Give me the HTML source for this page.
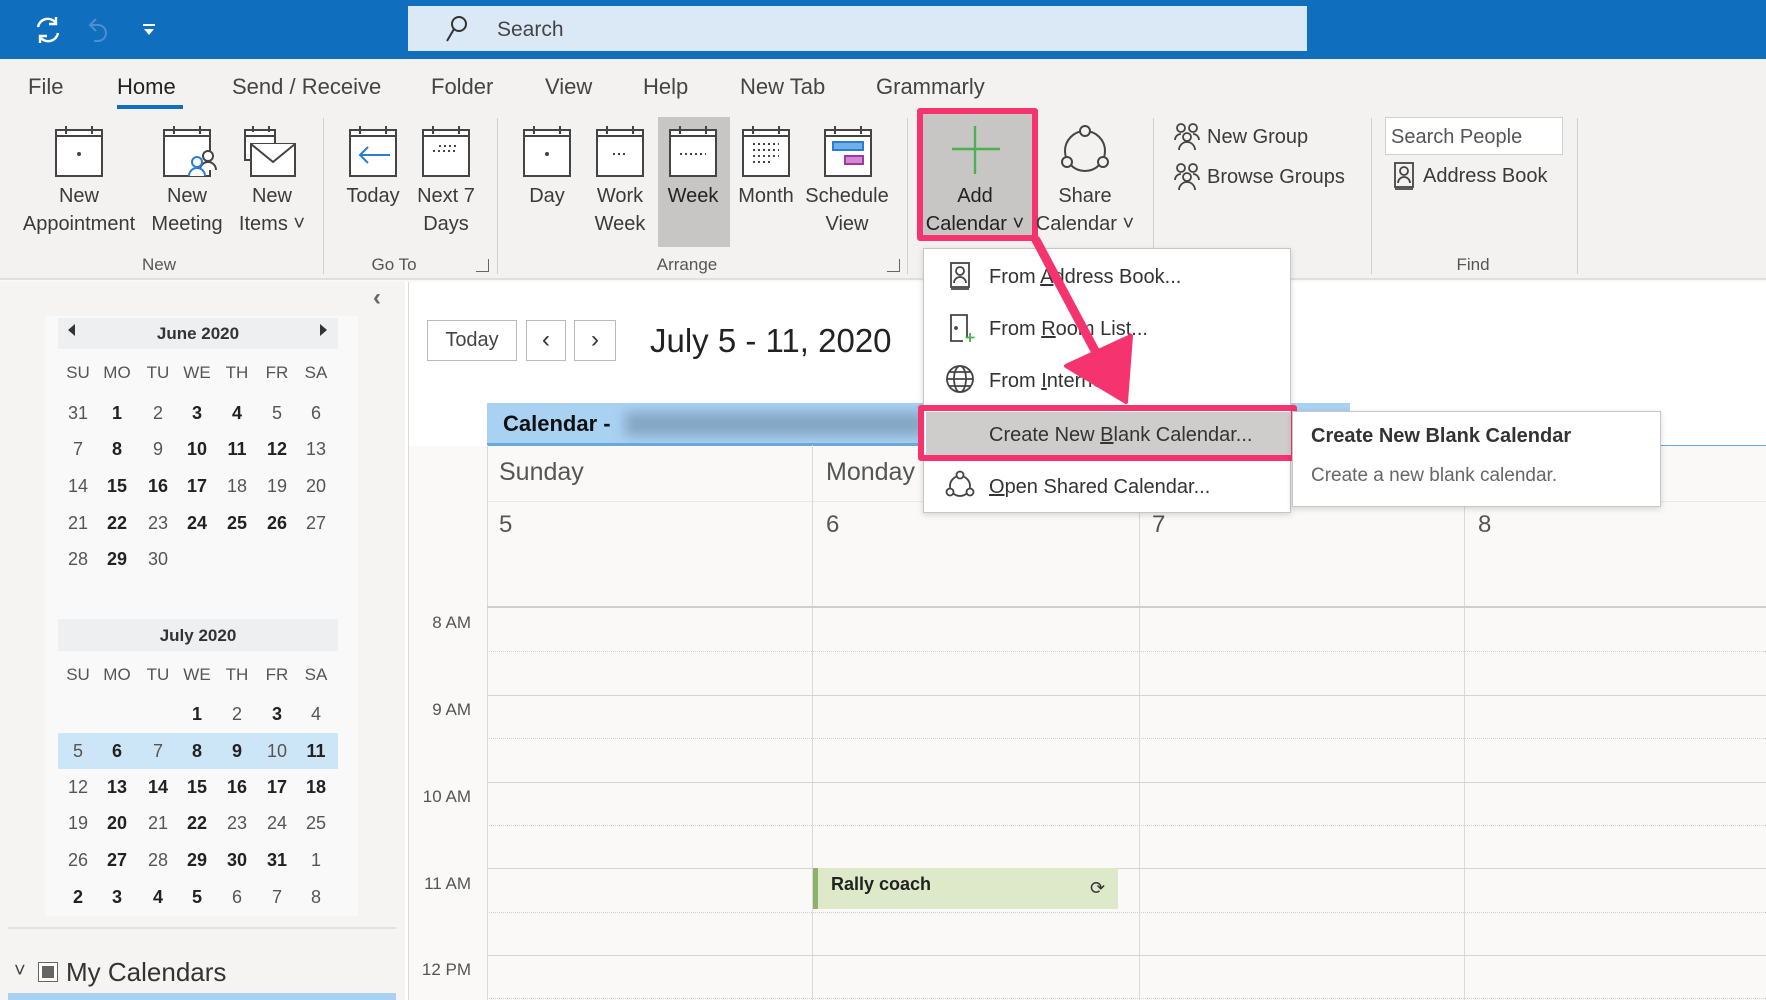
<!DOCTYPE html>
<html><head><meta charset="utf-8">
<style>
*{margin:0;padding:0;box-sizing:border-box}
body{width:1766px;height:1000px;overflow:hidden;background:#faf9f8;font-family:"Liberation Sans",sans-serif;color:#323130;position:relative}
.a{position:absolute;white-space:nowrap}
.tab{position:absolute;top:74px;font-size:22px;color:#444}
.lbl{position:absolute;font-size:20px;color:#3b3a39;text-align:center;line-height:28px;transform:translateX(-50%)}
.glbl{position:absolute;top:255px;font-size:17px;color:#555;transform:translateX(-50%)}
.sep{position:absolute;top:118px;width:1px;height:156px;background:#d2d0ce}
.ic{position:absolute;top:124px}
.mc{position:absolute;font-size:18px;color:#555;width:36px;text-align:center;transform:translateX(-50%)}
.b{font-weight:bold;color:#222}
.hl{position:absolute;left:487px;width:1279px;height:1px;background:#d6d4d2}
.dl{position:absolute;left:487px;width:1279px;height:0;border-top:1px dotted #d0d0d0}
.vl{position:absolute;top:445px;width:1px;height:555px;background:#dcdad8}
.tm{position:absolute;font-size:17px;color:#555;right:1295px}
.mi{position:absolute;left:989px;font-size:20px;color:#333}
</style></head><body>
<!-- title bar -->
<div class="a" style="left:0;top:0;width:1766px;height:59px;background:#106ebe"></div>
<svg class="a" style="left:32px;top:14px" width="32" height="32" viewBox="0 0 32 32" fill="none" stroke="#fff" stroke-width="2.4"><path d="M6 13a10 10 0 0 1 18-4M26 19a10 10 0 0 1-18 4"/><path d="M24 3v7h-7M8 29v-7h7"/></svg>
<svg class="a" style="left:86px;top:16px" width="26" height="30" viewBox="0 0 26 30" fill="none" stroke="#4d8fd0" stroke-width="2"><path d="M10 3 4 9l6 6M4 9h8a8 8 0 0 1 0 16H8"/></svg>
<svg class="a" style="left:141px;top:22px" width="16" height="16" viewBox="0 0 16 16" fill="#fff"><rect x="2" y="2" width="12" height="2"/><path d="M3 7h10l-5 6z"/></svg>
<div class="a" style="left:408px;top:6px;width:899px;height:45px;background:#dbe9f7"></div>
<svg class="a" style="left:444px;top:14px" width="26" height="30" viewBox="0 0 26 30" fill="none" stroke="#333" stroke-width="2"><circle cx="15" cy="10" r="7"/><path d="M10 15 3 27"/></svg>
<div class="a" style="left:497px;top:18px;font-size:21px;color:#444">Search</div>
<!-- ribbon -->
<div class="a" style="left:0;top:59px;width:1766px;height:221px;background:#f3f2f1;border-bottom:2px solid #e1dfdd"></div>
<div class="tab" style="left:28px">File</div>
<div class="tab" style="left:117px;color:#222;font-weight:500">Home</div>
<div class="a" style="left:117px;top:105px;width:66px;height:4px;background:#106ebe"></div>
<div class="tab" style="left:232px">Send / Receive</div>
<div class="tab" style="left:431px">Folder</div>
<div class="tab" style="left:545px">View</div>
<div class="tab" style="left:643px">Help</div>
<div class="tab" style="left:740px">New Tab</div>
<div class="tab" style="left:876px">Grammarly</div>

<!-- week selected bg -->
<div class="a" style="left:658px;top:117px;width:72px;height:130px;background:#c8c6c4"></div>
<!-- add calendar -->
<div class="a" style="left:920px;top:111px;width:114px;height:126px;background:#c8c6c4"></div>
<div class="a" style="left:917px;top:108px;width:121px;height:133px;border:6px solid #f5336f;border-radius:3px"></div>

<!-- calendar icons -->
<svg class="ic" style="left:54px" width="50" height="54" viewBox="0 0 50 54" fill="#fff" stroke="#444" stroke-width="2"><rect x="2" y="6" width="46" height="46"/><path d="M2 12h46M12 2v8M38 2v8"/><circle cx="25" cy="30" r="1" fill="#444"/></svg>
<svg class="ic" style="left:162px" width="58" height="58" viewBox="0 0 58 58" fill="#fff" stroke="#444" stroke-width="2"><rect x="2" y="6" width="46" height="46"/><path d="M2 12h46M12 2v8M38 2v8"/><circle cx="46" cy="32" r="5"/><path d="M38 46a8 8 0 0 1 16 0" /><circle cx="35" cy="38" r="5" stroke="#2b7cd3"/><path d="M27 52a8 8 0 0 1 16 0" stroke="#2b7cd3"/></svg>
<svg class="ic" style="left:243px" width="54" height="56" viewBox="0 0 54 56" fill="#fff" stroke="#444" stroke-width="2"><rect x="2" y="6" width="30" height="30"/><path d="M2 12h30M10 2v6M26 2v6"/><rect x="8" y="20" width="44" height="32"/><path d="M8 20l22 18 22-18"/></svg>
<svg class="ic" style="left:348px" width="50" height="54" viewBox="0 0 50 54" fill="#fff" stroke="#444" stroke-width="2"><rect x="2" y="6" width="46" height="46"/><path d="M2 12h46M12 2v8M38 2v8"/><path d="M12 31h30M20 23l-8 8 8 8" stroke="#2b7cd3"/></svg>
<svg class="ic" style="left:421px" width="50" height="54" viewBox="0 0 50 54" fill="#fff" stroke="#444" stroke-width="2"><rect x="2" y="6" width="46" height="46"/><path d="M2 12h46M12 2v8M38 2v8"/><path d="M18 22h18M12 27h24" stroke-dasharray="2 3"/></svg>
<svg class="ic" style="left:522px" width="50" height="54" viewBox="0 0 50 54" fill="#fff" stroke="#444" stroke-width="2"><rect x="2" y="6" width="46" height="46"/><path d="M2 12h46M12 2v8M38 2v8"/><circle cx="25" cy="30" r="1" fill="#444"/></svg>
<svg class="ic" style="left:595px" width="50" height="54" viewBox="0 0 50 54" fill="#fff" stroke="#444" stroke-width="2"><rect x="2" y="6" width="46" height="46"/><path d="M2 12h46M12 2v8M38 2v8"/><path d="M18 30h14" stroke-dasharray="2 3"/></svg>
<svg class="ic" style="left:668px" width="50" height="54" viewBox="0 0 50 54" fill="#fff" stroke="#444" stroke-width="2"><rect x="2" y="6" width="46" height="46"/><path d="M2 12h46M12 2v8M38 2v8"/><path d="M12 30h26" stroke-dasharray="2 3"/></svg>
<svg class="ic" style="left:741px" width="50" height="54" viewBox="0 0 50 54" fill="#fff" stroke="#444" stroke-width="2"><rect x="2" y="6" width="46" height="46"/><path d="M2 12h46M12 2v8M38 2v8"/><path d="M12 20h26M12 26h26M12 32h26M12 38h18" stroke-dasharray="2 3"/></svg>
<svg class="ic" style="left:823px" width="50" height="54" viewBox="0 0 50 54" fill="#fff" stroke="#444" stroke-width="2"><rect x="2" y="6" width="46" height="46"/><path d="M2 12h46M12 2v8M38 2v8"/><rect x="10" y="18" width="30" height="8" fill="#6fb0e8" stroke="#2b7cd3"/><rect x="22" y="32" width="18" height="8" fill="#d886d8" stroke="#9b3d9b"/></svg>
<svg class="ic" style="left:950px;top:124px" width="50" height="50" viewBox="0 0 50 50" stroke="#4caf50" stroke-width="2.4"><path d="M25 2v48M2 25h48"/></svg>
<svg class="ic" style="left:1058px;top:124px" width="54" height="54" viewBox="0 0 54 54" fill="none" stroke="#444" stroke-width="2"><circle cx="27" cy="27" r="20"/><circle cx="27" cy="7" r="5" fill="#f3f2f1"/><circle cx="9" cy="38" r="5" fill="#f3f2f1"/><circle cx="45" cy="38" r="5" fill="#f3f2f1"/></svg>

<div class="lbl" style="left:79px;top:182px">New<br>Appointment</div>
<div class="lbl" style="left:187px;top:182px">New<br>Meeting</div>
<div class="lbl" style="left:272px;top:182px">New<br>Items ˅</div>
<div class="lbl" style="left:373px;top:182px">Today</div>
<div class="lbl" style="left:446px;top:182px">Next 7<br>Days</div>
<div class="lbl" style="left:547px;top:182px">Day</div>
<div class="lbl" style="left:620px;top:182px">Work<br>Week</div>
<div class="lbl" style="left:693px;top:182px;color:#222">Week</div>
<div class="lbl" style="left:766px;top:182px">Month</div>
<div class="lbl" style="left:847px;top:182px">Schedule<br>View</div>
<div class="lbl" style="left:975px;top:182px;color:#222">Add<br>Calendar ˅</div>
<div class="lbl" style="left:1085px;top:182px">Share<br>Calendar ˅</div>

<div class="sep" style="left:323px"></div>
<div class="sep" style="left:497px"></div>
<div class="sep" style="left:907px"></div>
<div class="sep" style="left:1153px"></div>
<div class="sep" style="left:1371px"></div>
<div class="sep" style="left:1577px"></div>

<svg class="a" style="left:1174px;top:122px" width="26" height="30" viewBox="0 0 26 30" fill="none" stroke="#444" stroke-width="1.8"><circle cx="7" cy="6" r="4"/><circle cx="19" cy="6" r="4"/><circle cx="13" cy="15" r="4"/><path d="M5 28a8 8 0 0 1 16 0M1 18a6 6 0 0 1 6-6M25 18a6 6 0 0 0-6-6"/></svg>
<div class="a" style="left:1207px;top:126px;font-size:20px;color:#3b3a39">New Group</div>
<svg class="a" style="left:1174px;top:162px" width="26" height="30" viewBox="0 0 26 30" fill="none" stroke="#444" stroke-width="1.8"><circle cx="7" cy="6" r="4"/><circle cx="19" cy="6" r="4"/><circle cx="13" cy="15" r="4"/><path d="M5 28a8 8 0 0 1 16 0M1 18a6 6 0 0 1 6-6M25 18a6 6 0 0 0-6-6"/></svg>
<div class="a" style="left:1207px;top:166px;font-size:20px;color:#3b3a39">Browse Groups</div>
<div class="a" style="left:1385px;top:117px;width:178px;height:38px;background:#fff;border:1px solid #d2d0ce"></div>
<div class="a" style="left:1391px;top:126px;font-size:20px;color:#555">Search People</div>
<svg class="a" style="left:1393px;top:161px" width="22" height="30" viewBox="0 0 22 30" fill="none" stroke="#444" stroke-width="1.8"><rect x="2" y="2" width="18" height="24"/><circle cx="11" cy="10" r="4"/><path d="M5 22a6 6 0 0 1 12 0M2 28h18"/></svg>
<div class="a" style="left:1423px;top:165px;font-size:20px;color:#3b3a39">Address Book</div>

<div class="glbl" style="left:159px">New</div>
<div class="glbl" style="left:394px">Go To</div>
<div class="a" style="left:476px;top:259px;width:13px;height:13px;border:1px solid #666;border-top:none;border-right:none;transform:scaleX(-1)"></div>
<div class="glbl" style="left:687px">Arrange</div>
<div class="a" style="left:887px;top:259px;width:13px;height:13px;border:1px solid #666;border-top:none;border-right:none;transform:scaleX(-1)"></div>
<div class="glbl" style="left:1473px">Find</div>

<!-- left pane -->
<div class="a" style="left:0;top:282px;width:405px;height:718px;background:#f5f4f3"></div>
<div class="a" style="left:405px;top:282px;width:3px;height:718px;background:#fff"></div>
<div class="a" style="left:373px;top:284px;font-size:24px;color:#666;font-weight:bold">‹</div>
<div class="a" style="left:45px;top:316px;width:313px;height:600px;background:#f9f9fa"></div>
<div class="a" style="left:58px;top:318px;width:280px;height:31px;background:#eeeff0"></div>
<div class="a" style="left:68px;top:324px;width:0;height:0;border:6px solid transparent;border-right:7px solid #333;border-left:none"></div>
<div class="a" style="left:320px;top:324px;width:0;height:0;border:6px solid transparent;border-left:7px solid #333;border-right:none"></div>
<div class="a" style="left:58px;top:324px;width:280px;text-align:center;font-size:17px;font-weight:bold;color:#333">June 2020</div>
<div class="a" style="left:58px;top:619px;width:280px;height:32px;background:#eeeff0"></div>
<div class="a" style="left:58px;top:626px;width:280px;text-align:center;font-size:17px;font-weight:bold;color:#333">July 2020</div>
<div class="a" style="left:58px;top:733px;width:280px;height:36px;background:#cde6f7"></div>
<div id="mini"></div>

<div class="a" style="left:8px;top:927px;width:388px;height:2px;background:#e1e1e1"></div>
<div class="a" style="left:14px;top:960px;font-size:20px;color:#444">˅</div>
<div class="a" style="left:38px;top:962px;width:20px;height:20px;border:1px solid #666;background:#fff"></div>
<div class="a" style="left:42px;top:966px;width:12px;height:12px;background:#666"></div>
<div class="a" style="left:66px;top:957px;font-size:26px;color:#333">My Calendars</div>
<div class="a" style="left:8px;top:993px;width:388px;height:7px;background:#a9d1f1"></div>

<!-- main -->
<div class="a" style="left:408px;top:282px;width:1358px;height:718px;background:#fff"></div>
<div class="a" style="left:427px;top:320px;width:90px;height:41px;border:1px solid #bbb;background:#fff;font-size:20px;text-align:center;line-height:39px;color:#444">Today</div>
<div class="a" style="left:526px;top:320px;width:40px;height:41px;border:1px solid #bbb;background:#fff;font-size:24px;text-align:center;line-height:38px;color:#333">&lsaquo;</div>
<div class="a" style="left:574px;top:320px;width:42px;height:41px;border:1px solid #bbb;background:#fff;font-size:24px;text-align:center;line-height:38px;color:#333">&rsaquo;</div>
<div class="a" style="left:650px;top:322px;font-size:33px;color:#222">July 5 - 11, 2020</div>

<div class="a" style="left:487px;top:403px;width:863px;height:42px;background:#a9d1f1;border-bottom:2px solid #6aa8dc"></div>
<div class="a" style="left:487px;top:445px;width:1279px;height:1px;background:#6aa8dc"></div>
<div class="a" style="left:503px;top:411px;font-size:22px;font-weight:bold;color:#111">Calendar -</div>
<div class="a" style="left:625px;top:412px;width:300px;height:24px;background:#7b9cb8;filter:blur(6px);opacity:.8"></div>
<div class="a" style="left:408px;top:446px;width:1358px;height:554px;background:#faf9f8"></div>
<div class="a" style="left:487px;top:501px;width:1279px;height:1px;background:#ebe9e7"></div>
<div class="a" style="left:499px;top:458px;font-size:25px;color:#555">Sunday</div>
<div class="a" style="left:826px;top:458px;font-size:25px;color:#555">Monday</div>
<div class="a" style="left:499px;top:511px;font-size:24px;color:#555">5</div>
<div class="a" style="left:826px;top:511px;font-size:24px;color:#555">6</div>
<div class="a" style="left:1152px;top:511px;font-size:24px;color:#555">7</div>
<div class="a" style="left:1478px;top:511px;font-size:24px;color:#555">8</div>
<div class="vl" style="left:487px"></div><div class="vl" style="left:812px"></div><div class="vl" style="left:1139px"></div><div class="vl" style="left:1464px"></div>
<div class="vl" style="left:408px;top:282px;height:718px"></div>
<div class="hl" style="top:606px;height:2px;background:#d0cecc"></div>
<div class="dl" style="top:651px"></div>
<div class="hl" style="top:695px"></div><div class="dl" style="top:738px"></div>
<div class="hl" style="top:782px"></div><div class="dl" style="top:825px"></div>
<div class="hl" style="top:868px"></div><div class="dl" style="top:912px"></div>
<div class="hl" style="top:955px"></div><div class="dl" style="top:998px"></div>
<div class="tm" style="top:613px">8 AM</div>
<div class="tm" style="top:700px">9 AM</div>
<div class="tm" style="top:787px">10 AM</div>
<div class="tm" style="top:874px">11 AM</div>
<div class="tm" style="top:960px">12 PM</div>
<div class="a" style="left:813px;top:868px;width:305px;height:41px;background:#dde9c9;border-left:5px solid #8db26a"></div>
<div class="a" style="left:831px;top:874px;font-size:18px;font-weight:bold;color:#222">Rally coach</div>
<div class="a" style="left:1090px;top:878px;font-size:18px;color:#333">⟳</div>

<!-- dropdown -->
<div class="a" style="left:923px;top:248px;width:368px;height:265px;background:#fff;border:1px solid #c8c6c4;box-shadow:0 2px 6px rgba(0,0,0,.15)"></div>
<svg class="a" style="left:949px;top:261px" width="22" height="30" viewBox="0 0 22 30" fill="none" stroke="#444" stroke-width="1.8"><rect x="2" y="2" width="18" height="24"/><circle cx="11" cy="10" r="4"/><path d="M5 22a6 6 0 0 1 12 0M2 28h18"/></svg>
<div class="mi" style="top:266px">From <u>A</u>ddress Book...</div>
<svg class="a" style="left:949px;top:313px" width="26" height="30" viewBox="0 0 26 30" fill="none" stroke="#444" stroke-width="1.8"><path d="M18 24V2H2v26h12"/><circle cx="7" cy="15" r="1" fill="#444"/><path d="M21 20v9M16.5 24.5h9" stroke="#4caf50"/></svg>
<div class="mi" style="top:318px">From <u>R</u>oom List...</div>
<svg class="a" style="left:945px;top:364px" width="30" height="30" viewBox="0 0 30 30" fill="none" stroke="#444" stroke-width="1.8"><circle cx="15" cy="15" r="13"/><ellipse cx="15" cy="15" rx="6" ry="13"/><path d="M2 15h26M4 8h22M4 22h22"/></svg>
<div class="mi" style="top:370px">From <u>I</u>nternet...</div>
<div class="a" style="left:926px;top:412px;width:365px;height:44px;background:#cfcdcb"></div>
<div class="a" style="left:918px;top:405px;width:379px;height:56px;border:6px solid #f5336f;border-radius:3px"></div>
<div class="mi" style="top:424px">Create New <u>B</u>lank Calendar...</div>
<svg class="a" style="left:945px;top:470px" width="30" height="30" viewBox="0 0 30 30" fill="none" stroke="#444" stroke-width="1.8"><circle cx="15" cy="16" r="10"/><circle cx="15" cy="5" r="3.5" fill="#fff"/><circle cx="5" cy="22" r="3.5" fill="#fff"/><circle cx="25" cy="22" r="3.5" fill="#fff"/></svg>
<div class="mi" style="top:476px"><u>O</u>pen Shared Calendar...</div>
<!-- tooltip -->
<div class="a" style="left:1292px;top:411px;width:369px;height:96px;background:#fff;border:1px solid #c8c6c4;box-shadow:0 2px 6px rgba(0,0,0,.15)"></div>
<div class="a" style="left:1311px;top:425px;font-size:20px;font-weight:bold;color:#333">Create New Blank Calendar</div>
<div class="a" style="left:1311px;top:465px;font-size:19px;color:#666">Create a new blank calendar.</div>
<!-- arrow -->
<svg class="a" style="left:0;top:0" width="1766" height="1000"><path d="M1036 240 L1100 360" stroke="#f5336f" stroke-width="9" stroke-linecap="round"/><path d="M1066 366 L1131 336 L1126 402 Z" fill="#f5336f" stroke="#f5336f" stroke-width="4" stroke-linejoin="round"/></svg>

<script>
var cx=[78,117,158,197,237,277,316];
function row(y,cells){var h='';cells.forEach(function(c,i){if(c===null)return;var b=c[1]?' b':'';h+='<div class="mc'+b+'" style="left:'+cx[i]+'px;top:'+y+'px">'+c[0]+'</div>';});return h;}
function p(s){return s.split(' ').map(function(t){if(t==='_')return null;return [t.replace('*',''),t.indexOf('*')>=0];});}
var h='';
var dn=['SU','MO','TU','WE','TH','FR','SA'];
dn.forEach(function(d,i){h+='<div class="mc" style="left:'+cx[i]+'px;top:363px;font-size:17px">'+d+'</div>';h+='<div class="mc" style="left:'+cx[i]+'px;top:665px;font-size:17px">'+d+'</div>';});
var J=['31 1* 2 3* 4* 5 6','7 8* 9 10* 11* 12* 13','14 15* 16* 17* 18 19 20','21 22* 23 24* 25* 26* 27','28 29* 30 _ _ _ _'];
var Jy=[403,439,476,513,549];
J.forEach(function(r,i){h+=row(Jy[i],p(r));});
var L=['_ _ _ 1* 2 3* 4','5 6* 7 8* 9* 10 11*','12 13* 14* 15* 16* 17* 18*','19 20* 21 22* 23 24 25','26 27* 28 29* 30* 31* 1','2* 3* 4* 5* 6 7 8'];
var Ly=[704,741,777,813,850,887];
L.forEach(function(r,i){h+=row(Ly[i],p(r));});
document.getElementById('mini').innerHTML=h;
</script>
</body></html>
